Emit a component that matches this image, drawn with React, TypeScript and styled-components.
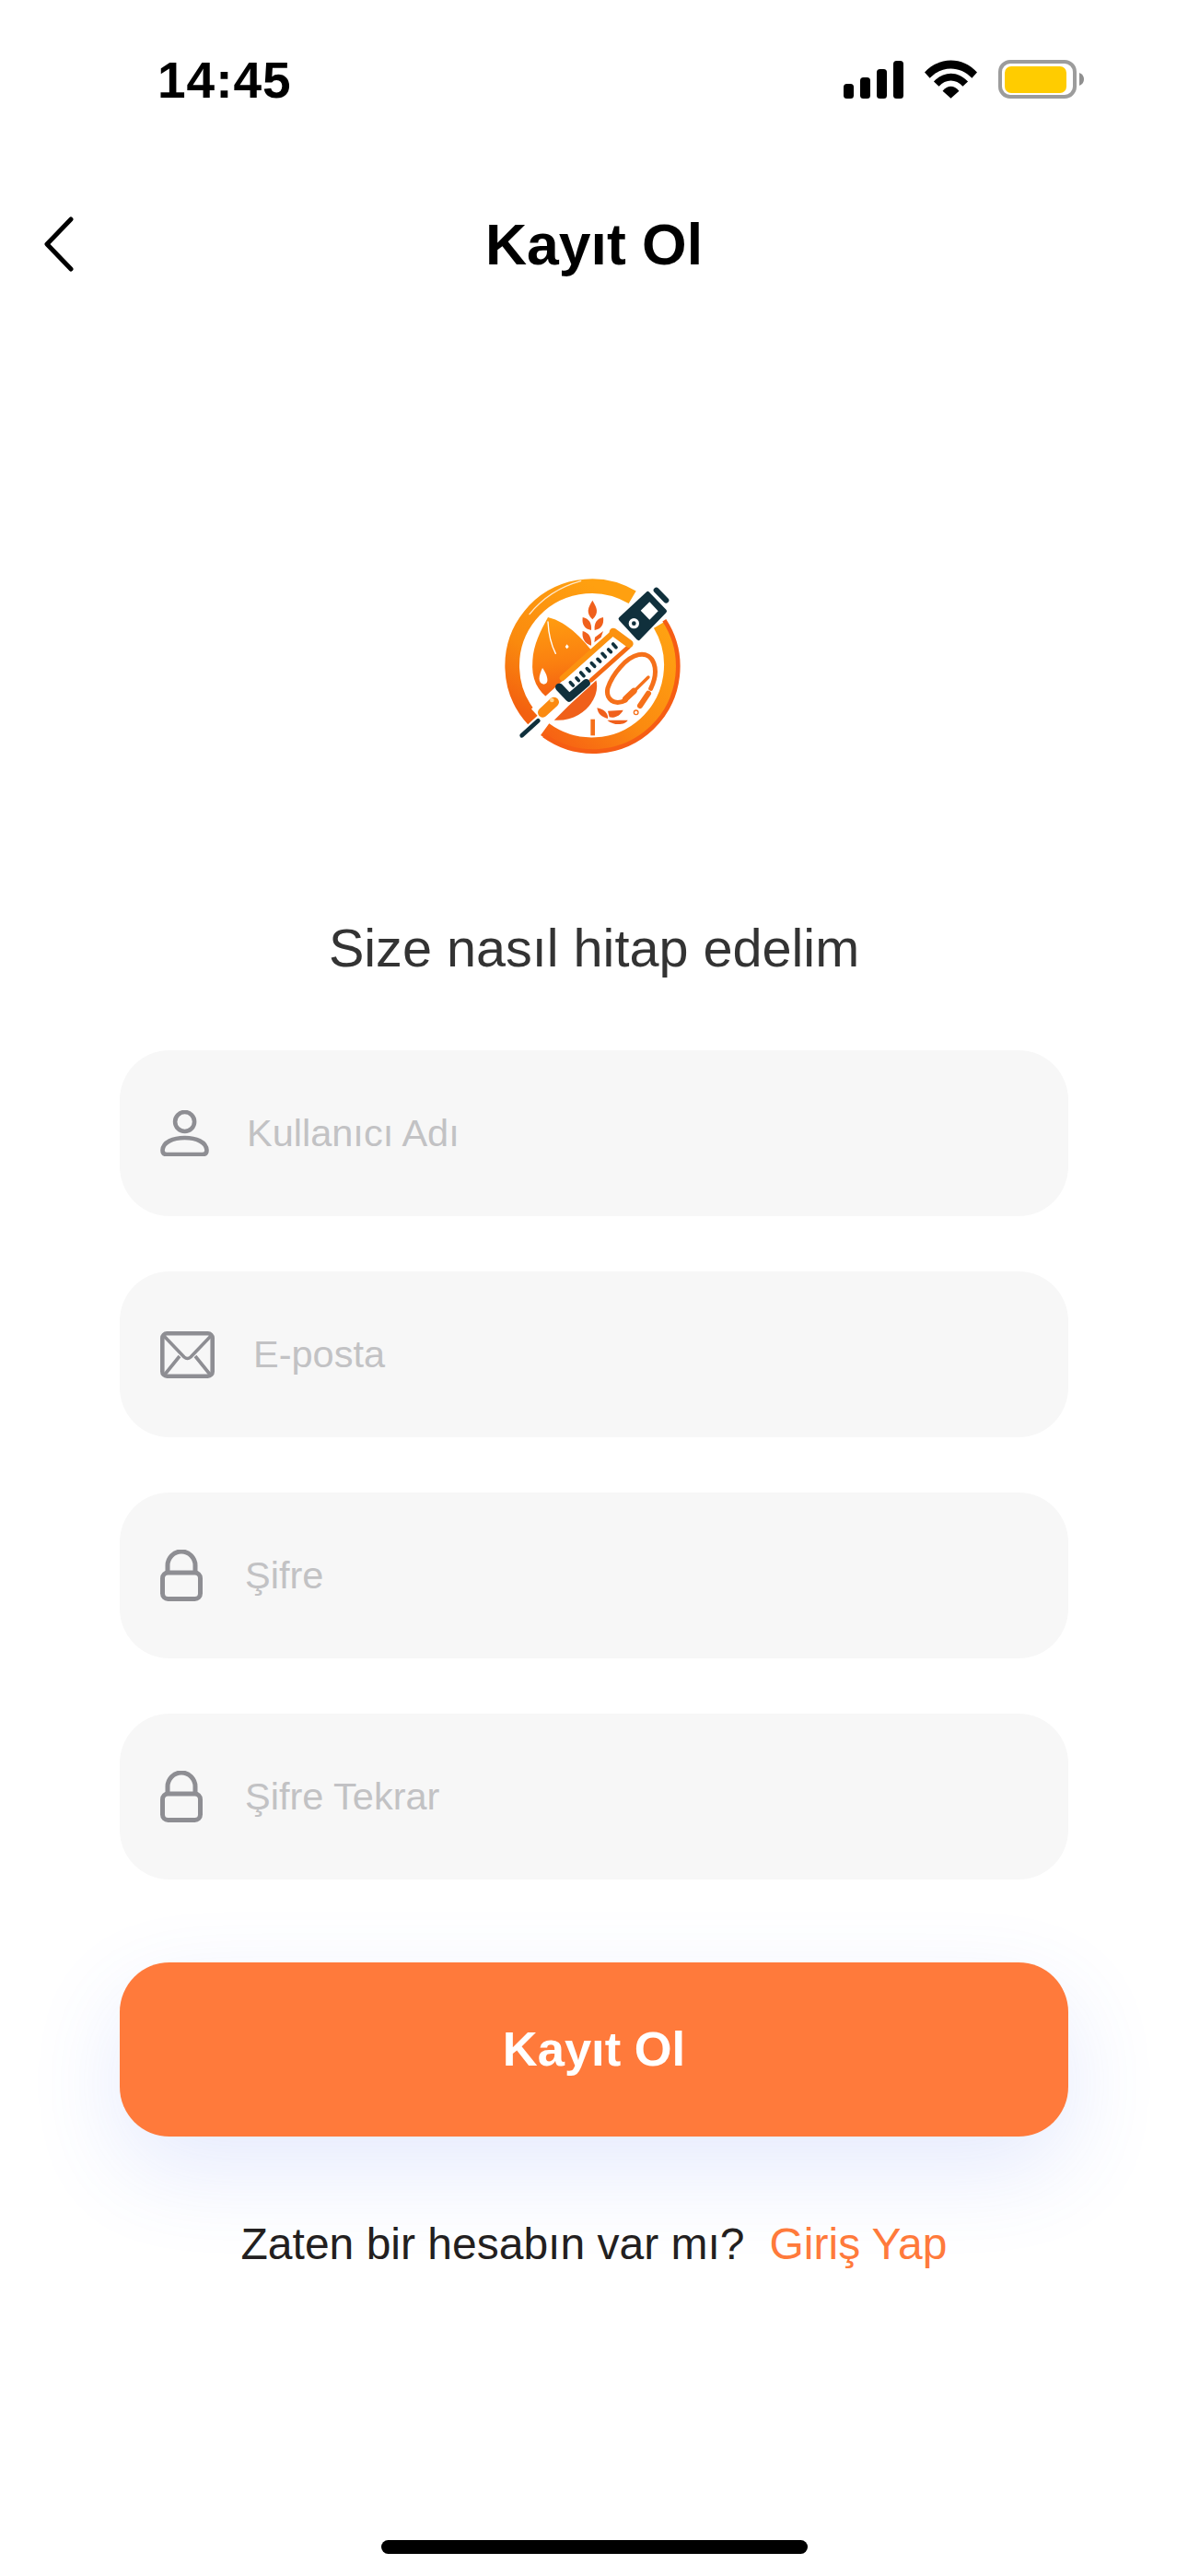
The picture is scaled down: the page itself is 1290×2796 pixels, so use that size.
import React from "react";
import styled, { createGlobalStyle } from "styled-components";

const Global = createGlobalStyle`
  html, body { margin: 0; padding: 0; background: #fff; }
  * { box-sizing: border-box; }
`;

const Page = styled.div`
  width: 1290px;
  height: 2796px;
  overflow: hidden;
  background: #fff;
  display: flex;
  flex-direction: column;
  align-items: center;
  font-family: "Liberation Sans", Arial, sans-serif;
`;

const StatusBar = styled.div`
  width: 100%;
  height: 174px;
  flex: none;
  display: flex;
  align-items: center;
  justify-content: space-between;
  padding: 0 113px 0 171px;
`;

const Clock = styled.span`
  font-size: 55px;
  font-weight: 700;
  color: #000;
  letter-spacing: 1px;
  line-height: 1;
`;

const StatusIcons = styled.div`
  display: flex;
  align-items: center;
  gap: 23px;
  margin-top: -2px;
`;

const NavBar = styled.header`
  width: 100%;
  height: 182px;
  flex: none;
  position: relative;
  display: flex;
  align-items: center;
  justify-content: center;
`;

const BackIcon = styled.svg`
  position: absolute;
  left: 46px;
  top: 58px;
`;

const Title = styled.h1`
  margin: 0;
  font-size: 62.5px;
  font-weight: 700;
  color: #000;
  line-height: 1;
`;

const LogoBox = styled.div`
  margin: 254px 10px 0 0;
  width: 240px;
  height: 230px;
  flex: none;
`;

const Subtitle = styled.h2`
  margin: 149px 0 0;
  font-size: 57.6px;
  font-weight: 400;
  line-height: 80px;
  color: #333;
`;

const Form = styled.div`
  margin-top: 71px;
  width: 1030px;
  display: flex;
  flex-direction: column;
  gap: 60px;
`;

const Field = styled.div<{ $gap: number }>`
  height: 180px;
  border-radius: 54px;
  background: #f7f7f7;
  display: flex;
  align-items: center;
  gap: ${(p) => p.$gap}px;
  padding-left: 44px;
`;

const Placeholder = styled.span`
  font-size: 41.5px;
  line-height: 1;
  color: #c2c2c4;
`;

const SubmitButton = styled.button`
  margin-top: 90px;
  width: 1030px;
  height: 189px;
  flex: none;
  border: 0;
  border-radius: 54px;
  background: #ff7a3b;
  color: #fff;
  font-family: inherit;
  font-size: 52.5px;
  font-weight: 700;
  padding: 0 0 2px;
  box-shadow: 0 36px 100px rgba(74, 105, 240, 0.14);
`;

const Footer = styled.p`
  margin: 87px 0 0;
  display: flex;
  gap: 27px;
  font-size: 48px;
  line-height: 60px;
  color: #231f20;
`;

const LoginLink = styled.span`
  color: #ff7a3b;
`;

const HomeIndicator = styled.div`
  margin-top: 291px;
  width: 463px;
  height: 15px;
  flex: none;
  border-radius: 8px;
  background: #000;
`;

const Signal = () => (
  <svg width="65" height="41" viewBox="0 0 65 41">
    <rect x="0" y="25" width="11" height="16" rx="3.5" />
    <rect x="18" y="18" width="11" height="23" rx="3.5" />
    <rect x="36" y="9" width="11" height="32" rx="3.5" />
    <rect x="54" y="0" width="11" height="41" rx="3.5" />
  </svg>
);

const Wifi = () => (
  <svg width="57" height="42" viewBox="372 45 172 125">
    <path d="M372 85 C420 33 496 33 544 85 L527 104 C488 62 428 62 389 104 Z" />
    <path d="M402 115 C435 80 481 80 514 115 L497 131 C475 106 441 106 419 131 Z" />
    <path d="M431 146 C448 126 468 126 485 146 L458 170 Z" />
  </svg>
);

const Battery = () => (
  <svg width="93" height="42" viewBox="0 0 93 42">
    <rect x="2" y="2" width="81" height="38" rx="11" fill="none" stroke="#9c9c9c" strokeWidth="4" />
    <rect x="7" y="7" width="67" height="29" rx="7" fill="#ffcc00" />
    <path d="M88 14 Q93 16 93 21 Q93 26 88 28 Z" fill="#8f8f8f" />
  </svg>
);

const PersonIcon = () => (
  <svg width="53" height="50" viewBox="0 0 53 50" fill="none" stroke="#8e8e93" strokeWidth="4.6">
    <circle cx="26.6" cy="12.5" r="10.5" />
    <path d="M2.5 43.5 C3 34.5 14 30 26.6 30 C39 30 50 34.5 50.5 43.5 Q50.5 48 46 48 H7 Q2.5 48 2.5 43.5 Z" />
  </svg>
);

const MailIcon = () => (
  <svg width="59" height="51" viewBox="0 0 59 51" fill="none" stroke="#8e8e93" strokeWidth="4.6">
    <rect x="2.3" y="2.3" width="54.4" height="46.4" rx="5" />
    <path d="M3 4 L26 28 Q29.5 31 33 28 L56 4" strokeWidth="3.6" />
    <path d="M4 48 L21 27 M55 48 L38 27" strokeWidth="3.6" />
  </svg>
);

const LockIcon = () => (
  <svg width="46" height="56" viewBox="0 0 46 56" fill="none" stroke="#8e8e93" strokeWidth="5">
    <rect x="2.5" y="25" width="41" height="28.5" rx="6" />
    <path d="M8 25 V17 A15 15 0 0 1 38 17 V25" />
  </svg>
);

const Logo = () => (
  <svg width="240" height="230" viewBox="0 0 720 690">
    <defs>
      <linearGradient id="ringTop" x1="0.7" y1="0" x2="0.2" y2="1">
        <stop offset="0" stopColor="#ffa010" />
        <stop offset="0.6" stopColor="#fa8a0e" />
        <stop offset="1" stopColor="#f3600f" />
      </linearGradient>
      <linearGradient id="ringBottom" x1="1" y1="0" x2="0" y2="1">
        <stop offset="0" stopColor="#ffa312" />
        <stop offset="0.55" stopColor="#fb8a10" />
        <stop offset="1" stopColor="#f65d14" />
      </linearGradient>
      <linearGradient id="leaf" x1="0.4" y1="0" x2="0.5" y2="1">
        <stop offset="0" stopColor="#ff9c10" />
        <stop offset="0.55" stopColor="#fb7f10" />
        <stop offset="1" stopColor="#f25a12" />
      </linearGradient>
    </defs>

    <path d="M177 513 A259 259 0 0 1 500 115" fill="none" stroke="url(#ringTop)" strokeWidth="47" />
    <path d="M590 203 A259 259 0 0 1 215 545" fill="none" stroke="url(#ringBottom)" strokeWidth="47" />
    <path d="M604 190 A276 276 0 0 1 212 565" fill="none" stroke="#f65d14" strokeWidth="14" />
    <path d="M165 170 Q230 90 332 62" fill="none" stroke="#ffe9cc" strokeWidth="4" strokeLinecap="round" />

    <path d="M225 180 C290 195 350 260 390 320 L235 450 C190 420 170 380 175 320 C178 270 200 225 225 180 Z" fill="url(#leaf)" />
    <path d="M382 385 C398 440 340 522 245 515 L290 470 Z" fill="#f0601a" />
    <path d="M225 195 Q228 255 250 298" fill="none" stroke="#fff" strokeWidth="4" strokeLinecap="round" />
    <path d="M287 268 L293 276 L287 283 L281 276 Z" fill="#fff" />
    <path d="M207 345 C195 370 190 395 212 398 C232 395 222 365 207 345 Z" fill="#fff" />

    <g fill="#f0601c">
      <path d="M370 125 C385 150 392 165 370 187 C348 165 355 150 370 125 Z" />
      <path d="M338 180 C360 185 368 200 366 222 C345 218 335 205 338 180 Z" />
      <path d="M405 180 C383 185 375 200 377 222 C398 218 408 205 405 180 Z" />
      <path d="M338 225 C358 230 368 245 366 272 C345 265 335 250 338 225 Z" />
      <path d="M405 225 L378 245 L376 262 L398 245 Z" />
    </g>

    <line x1="195" y1="505" x2="490" y2="240" stroke="#fff" strokeWidth="72" />
    <line x1="140" y1="565" x2="193" y2="517" stroke="#10303c" strokeWidth="14" strokeLinecap="round" />
    <line x1="208" y1="490" x2="245" y2="456" stroke="#fb8a10" strokeWidth="32" strokeLinecap="round" />
    <circle cx="238" cy="450" r="7" fill="#ffd28a" />
    <path d="M262 408 L294 442 L350 394" fill="none" stroke="#10303c" strokeWidth="26" strokeLinecap="round" strokeLinejoin="round" />
    <line x1="272" y1="378" x2="440" y2="228" stroke="#fb9210" strokeWidth="18" strokeLinecap="round" />
    <line x1="366" y1="385" x2="488" y2="276" stroke="#f56a14" strokeWidth="14" strokeLinecap="round" />
    <line x1="438" y1="228" x2="490" y2="266" stroke="#fb9210" strokeWidth="26" strokeLinecap="round" />
    <g stroke="#10303c" strokeWidth="11" strokeLinecap="round">
      <path d="M307 402 L298 392 M325 386 L318 378 M342 371 L332 360 M360 355 L352 347 M377 340 L367 329 M395 324 L387 316 M412 309 L402 298 M430 293 L422 285 M447 278 L437 267" />
    </g>

    <path d="M462 185 L550 103 L605 160 L520 248 Z" fill="#10303c" stroke="#10303c" strokeWidth="14" strokeLinejoin="round" />
    <path d="M527 158 L556 130 L584 160 L556 188 Z" fill="#fff" />
    <circle cx="505" cy="200" r="17" fill="#fff" />
    <circle cx="505" cy="200" r="7" fill="#10303c" />
    <line x1="578" y1="92" x2="610" y2="125" stroke="#10303c" strokeWidth="18" strokeLinecap="round" />

    <g fill="none" stroke="#f5701a" strokeLinecap="round">
      <path d="M478 450 C440 470 412 445 420 410 C435 365 480 310 520 302 C570 292 590 350 560 412" strokeWidth="15" />
      <path d="M488 438 L552 375" strokeWidth="10" />
      <path d="M478 445 L505 420" strokeWidth="20" />
      <path d="M525 468 L552 428" strokeWidth="18" />
      <path d="M371 512 L371 565" strokeWidth="14" strokeLinecap="butt" />
    </g>
    <circle cx="512" cy="490" r="7" fill="none" stroke="#f5701a" strokeWidth="4" />
    <g fill="#f0601c">
      <path d="M385 475 C410 480 422 495 420 510 C400 505 388 495 385 475 Z" />
      <path d="M420 485 L470 482 C462 500 440 510 425 505 Z" />
      <path d="M418 515 L485 515 C478 530 440 535 418 515 Z" />
    </g>
  </svg>
);

export default function App() {
  return (
    <Page>
      <Global />
      <StatusBar>
        <Clock>14:45</Clock>
        <StatusIcons>
          <Signal />
          <Wifi />
          <Battery />
        </StatusIcons>
      </StatusBar>
      <NavBar>
        <BackIcon width="36" height="66" viewBox="0 0 36 66" fill="none" stroke="#000" strokeWidth="5" strokeLinecap="round" strokeLinejoin="round">
          <path d="M31 6 L5 33 L31 60" />
        </BackIcon>
        <Title>Kayıt Ol</Title>
      </NavBar>
      <LogoBox>
        <Logo />
      </LogoBox>
      <Subtitle>Size nasıl hitap edelim</Subtitle>
      <Form>
        <Field $gap={41}>
          <PersonIcon />
          <Placeholder>Kullanıcı Adı</Placeholder>
        </Field>
        <Field $gap={42}>
          <MailIcon />
          <Placeholder>E-posta</Placeholder>
        </Field>
        <Field $gap={46}>
          <LockIcon />
          <Placeholder>Şifre</Placeholder>
        </Field>
        <Field $gap={46}>
          <LockIcon />
          <Placeholder>Şifre Tekrar</Placeholder>
        </Field>
      </Form>
      <SubmitButton>Kayıt Ol</SubmitButton>
      <Footer>
        <span>Zaten bir hesabın var mı?</span>
        <LoginLink>Giriş Yap</LoginLink>
      </Footer>
      <HomeIndicator />
    </Page>
  );
}
